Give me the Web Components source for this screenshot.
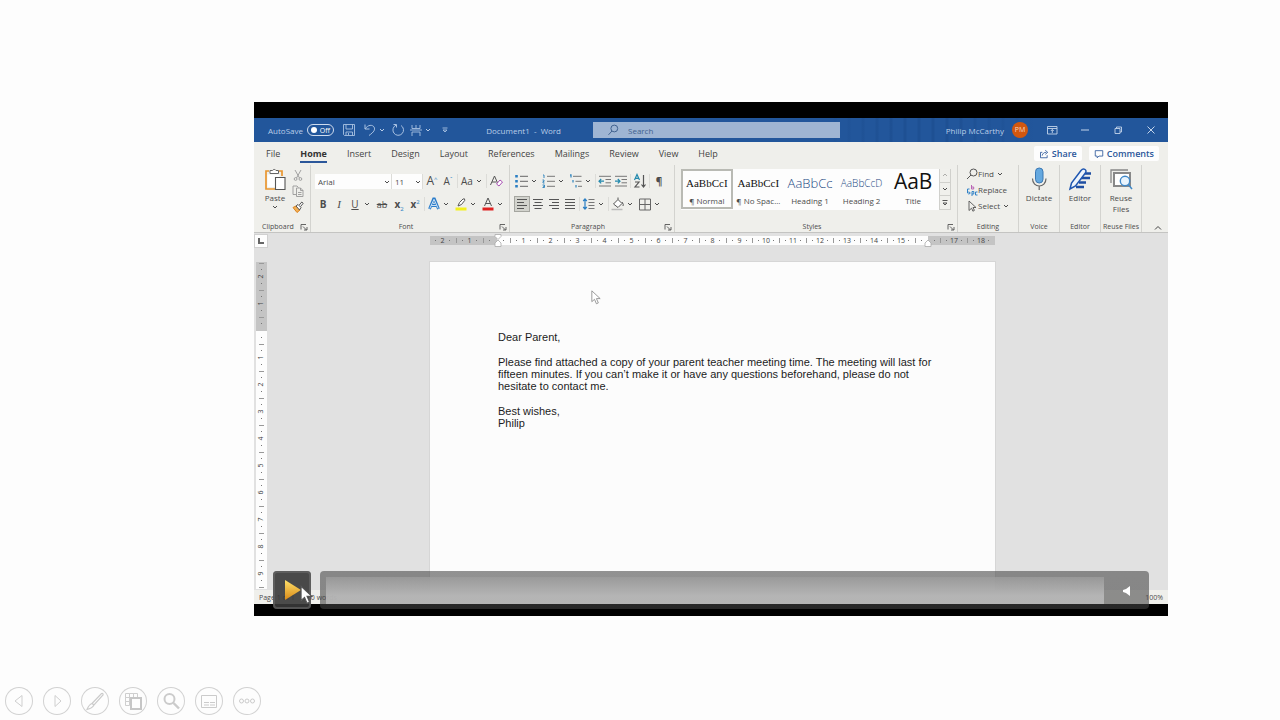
<!DOCTYPE html>
<html lang="en">
<head>
<meta charset="utf-8">
<title>Slide show</title>
<style>
html,body{margin:0;height:100%;background:#fdfdfd}
body{font-family:"Open Sans","Noto Sans",sans-serif;font-size:8px;color:#4c4c4c}
</style>
</head>
<body>
<slide-show></slide-show>
<script>
const ICONS = {
  chevron:['0 0 8 8','<path d="M2 3l2 2 2-2" fill="none" stroke="currentColor"/>'],
  more2:['0 0 8 8','<path d="M1.500 1.500h5M2 4l2 2 2-2z" fill="none" stroke="#555"/>'],
  launch:['0 0 8 8','<path d="M1 6.500V1.500h5M3 3.500l3.500 3.500M7 4v3H4" fill="none" stroke="#555" stroke-width=".9"/>'],
  save:['0 0 16 16','<path d="M2.500 2.500h11v11h-10l-1-1zM5 2.500v4.500h6.500V2.500M5 13.500V10h6.500v3.500M7.500 11v2" fill="none" stroke="#a9c2e2" stroke-width=".9"/>'],
  undo:['0 0 16 16','<path d="M3 2.500v4.500h4.500M3 7c3-4.500 7.500-4.500 9-2s0 5-5 8.500" fill="none" stroke="#a9c2e2"/>'],
  redo:['0 0 16 16','<path d="M3.500 2.500h3v3M6 3.200a5.300 5.300 0 1 0 5 .3" fill="none" stroke="#a9c2e2"/>'],
  spacing:['0 0 16 16','<path d="M2 8h12M4 3v3.500M12 3v3.500M4 6.500h8M4 14V10h8v4M8 3v3" fill="none" stroke="#a9c2e2" stroke-width=".9"/>'],
  qat:['0 0 8 8','<path d="M1.500 2h5M2 4l2 2 2-2z" fill="none" stroke="#a9c2e2" stroke-width=".9"/>'],
  search:['0 0 12 12','<circle cx="7.300" cy="4.500" r="3.400" fill="none" stroke="currentColor"/><path d="M5 7L1.500 10.800" stroke="currentColor"/>'],
  ribbonopts:['0 0 12 12','<path d="M1.500 2.500h9.500v7.500H1.500zM1.500 4.500h9.500M6.300 9V5.500M4.800 7l1.500-1.500L7.800 7" fill="none" stroke="#c3d4ea" stroke-width=".9"/>'],
  minimize:['0 0 12 12','<path d="M2 6h8" stroke="#c3d4ea"/>'],
  restore:['0 0 12 12','<path d="M3 4.500h5v5H3zM4.500 4.500V3H9.500v5H8" fill="none" stroke="#c3d4ea" stroke-width=".9"/>'],
  close:['0 0 12 12','<path d="M2.500 2.500l7 7M9.500 2.500l-7 7" stroke="#c3d4ea"/>'],
  share:['0 0 12 12','<path d="M4 4H1.800v6.500h8V7.500M3.800 8c.5-3 2.500-4 5-4M7.500 1.500L10.500 4 7.500 6.500" fill="none" stroke="#2b579a"/>'],
  comment:['0 0 12 12','<path d="M1.500 2h9v6.500H6L3.800 10.500V8.500H1.500z" fill="none" stroke="#2b579a"/>'],
  paste:['0 0 24 24','<path d="M6 4H3v18h9" fill="none" stroke="#e9962f" stroke-width="1.700"/><path d="M16 4h3v5" fill="none" stroke="#e9962f" stroke-width="1.700"/><path d="M7 6.500V3.500h2.500a2 2 0 0 1 3.500 0H15.500v3z" fill="#fff" stroke="#666"/><path d="M4.500 7.500h12V10H12v10H4.500z" fill="#fff"/><path d="M12.500 10.500h9.500v12h-9.500z" fill="#fff" stroke="#555" stroke-width="1.100"/>'],
  cut:['0 0 12 12','<path d="M3 1l4.500 8M9 1L4.500 9" fill="none" stroke="#999" stroke-width=".9"/><circle cx="3.600" cy="10" r="1.400" fill="none" stroke="#999" stroke-width=".9"/><circle cx="8.400" cy="10" r="1.400" fill="none" stroke="#999" stroke-width=".9"/>'],
  copy:['0 0 12 12','<path d="M4 9.500H1V1h4l1.500 1.500M4.500 3h4l2.500 2.500v6H4.500zM8.500 3v2.500H11M6 7.500h3.500M6 9.500h3.500" fill="none" stroke="#999" stroke-width=".9"/>'],
  brush:['0 0 12 12','<path d="M1 6.500l3-1.500 4 4-3 2.500z" fill="#f3b056" stroke="#d98320"/><path d="M4 5l2-1.500L9 6.500 7.500 9zM7.300 4L9.800 1l1.400 1.300L8.600 5.500" fill="#fff" stroke="#444" stroke-width=".9"/>'],
  clear:['0 0 16 16','<path d="M2.500 12L6.500 3l4 9M4 9h4.500" fill="none" stroke="#555"/><path d="M8.500 11l3.500-4 2.500 2-3.500 4z" fill="#fff" stroke="#a94fb4"/>'],
  effects:['0 0 16 16','<path d="M3.500 13L7.600 3h.8l4.100 10M5 9.500h6" fill="none" stroke="#2b7cc9" stroke-width="2.800"/><path d="M3.800 12.500L8 3.300l4.200 9.200M5.300 9.500h5.400" fill="none" stroke="#dbebf9" stroke-width=".9"/>'],
  pen:['0 0 16 16','<path d="M2.500 11.500h11v3h-11z" fill="#f3f01d"/><path d="M5 10l1.500-3.500L10 3q2-1 1.800 1.300L8.500 8.500 5 10z" fill="#fff" stroke="#555"/>'],
  color:['0 0 16 16','<path d="M2.500 11.500h11v3h-11z" fill="#df2222"/><path d="M4.500 10L8 2l3.500 8M5.700 7.500h4.600" fill="none" stroke="#555"/>'],
  bullets:['0 0 16 16','<path d="M2.500 2v2.500M2.500 7v2.500M2.500 12v2.500" stroke="#2b7fc4" stroke-width="2.600"/><path d="M6 3.300h8M6 8.300h8M6 13.300h8" stroke="#666"/>'],
  numbers:['0 0 16 16','<path d="M2 2h1v3M1.500 7h1.500v1.500H2V10h1.500M1.500 12h2v2.500h-2M2 13.300h1.500" fill="none" stroke="#3a8ac0"/><path d="M6 3.300h8M6 8.300h8M6 13.300h8" stroke="#777"/>'],
  multi:['0 0 16 16','<path d="M2 2h1v2.500M5 7v2.500M8 12v2.500" fill="none" stroke="#3a8ac0" stroke-width="1.300"/><path d="M5 3.300h8.500M7.500 8.300h6M10 13.300h4" stroke="#777"/>'],
  outdent:['0 0 16 16','<path d="M2 3.300h12M8.500 6.500h5.500M8.500 9.800h5.500M2 13h12" stroke="#777"/><path d="M2 8.200h5M4.200 6L2 8.200l2.200 2.200" fill="none" stroke="#2389ad" stroke-width="1.200"/>'],
  indent:['0 0 16 16','<path d="M2 3.300h12M8.500 6.500h5.500M8.500 9.800h5.500M2 13h12" stroke="#777"/><path d="M2 8.200h5M4.800 6L7 8.200l-2.200 2.200" fill="none" stroke="#2389ad" stroke-width="1.200"/>'],
  sort:['0 0 16 16','<path d="M2.500 7L5 1.500 7.500 7M3.500 5.300h3" fill="none" stroke="#2389ad" stroke-width="1.200"/><path d="M3 9h4l-4 5h4.500M11.500 2v12M9.500 11.500l2 2.500 2-2.500" fill="none" stroke="#555" stroke-width="1.200"/>'],
  left:['0 0 16 16','<path d="M3 3.500h10M3 6.500h7M3 9.500h10M3 12.500h7" stroke="#555"/>'],
  center:['0 0 16 16','<path d="M3 3.500h10M4.500 6.500h7M3 9.500h10M4.500 12.500h7" stroke="#555"/>'],
  right:['0 0 16 16','<path d="M3 3.500h10M6 6.500h7M3 9.500h10M6 12.500h7" stroke="#555"/>'],
  justify:['0 0 16 16','<path d="M3 3.500h10M3 6.500h10M3 9.500h10M3 12.500h10" stroke="#555"/>'],
  linesp:['0 0 16 16','<path d="M7.500 3.500h6M7.500 6.500h6M7.500 9.500h6M7.500 12.500h6" stroke="#777"/><path d="M4 3v10M2.200 5L4 3l1.800 2M2.200 11L4 13l1.800-2" fill="none" stroke="#2b7fc4" stroke-width="1.200"/>'],
  bucket:['0 0 16 16','<path d="M3.500 8L8 3.500 12 7.500 8 11.500zM8 3.500V1.500M12 6q2 2.500 1 4" fill="#fff" stroke="#555"/><path d="M1.500 13.500h11" stroke="#bbb" stroke-width="1.500"/>'],
  borders:['0 0 16 16','<path d="M2.500 3h11v11h-11zM8 3v11M2.500 8.500h11" fill="none" stroke="#666"/>'],
  find:['0 0 12 12','<circle cx="7.500" cy="4.500" r="3.500" fill="none" stroke="#555"/><path d="M5 7L1 11" stroke="#555"/>'],
  replace:['0 0 12 12','<path d="M5.500 1v4h2.200V3H5.500" fill="none" stroke="#b965b5"/><path d="M3.500 5H1.500v4H4M2.800 7.500L4.300 9 2.800 10.500" fill="none" stroke="#3283c7"/><path d="M6 12V7.500h1.800V10H6M11.500 8H9.500v3h2" fill="none" stroke="#3283c7"/>'],
  select:['0 0 12 12','<path d="M3 1v9.500l2.600-2.300 1.300 3 1.500-.8L7 7.500h3z" fill="none" stroke="#555" stroke-width=".9"/>'],
  mic:['0 0 24 24','<rect x="8.500" y="1" width="7.500" height="15" rx="3.700" fill="#64a8df" stroke="#3a78b4"/><path d="M5.500 11.500c0 10 13.500 10 13.500 0M12.200 19v4" fill="none" stroke="#666" stroke-width="1.200"/>'],
  editor:['0 0 24 24','<path d="M13 6.500h10M12 11h10M11 15.500h7M8 20h8" stroke="#1f4fa3" stroke-width="2.600"/><path d="M2 22l1.500-6L13 3.500q2-2.500 4-1t0 4L7.500 19z" fill="#eef5fc" stroke="#1f56b0" stroke-width="1.500"/>'],
  reuse:['0 0 24 24','<path d="M2 16V3h17" fill="none" stroke="#888" stroke-width="1.300"/><path d="M5 6h16v13H5z" fill="#fff" stroke="#888" stroke-width="2"/><circle cx="16" cy="14" r="4.700" fill="#e9f4fd" stroke="#3f88c8" stroke-width="1.400"/><path d="M19.300 17.500L23 22" stroke="#3f88c8" stroke-width="1.500"/>'],
  collapse:['0 0 8 8','<path d="M1 5.500l3-3 3 3" fill="none" stroke="#444"/>'],
  cursor:['0 0 12 18','<path d="M1 1v13l3.200-2.800 2.300 5.300 2.300-1-2.300-5.200H11z" fill="var(--fill,#fff)" stroke="var(--line,#777)" stroke-width="var(--sw,1)"/>'],
  prev:['0 0 28 28','<path d="M17 8.500v11L10 14z" fill="none" stroke="#cfcfcf"/>'],
  next:['0 0 28 28','<path d="M12 8.500v11L18 14z" fill="none" stroke="#cfcfcf"/>'],
  ink:['0 0 28 28','<path d="M11 16.500L20.500 6.500q2-.5 1.500 1.500L13 18zM11 16.500q-3 1-5 6 5-1 7-4.500z" fill="none" stroke="#cbcbcb" stroke-width="1.200"/>'],
  grid:['0 0 28 28','<path d="M6.500 6.500h4v4h-4zM10.500 6.500h4v4h-4zM14.500 6.500h4v4h-4zM6.500 10.500h4v4h-4zM6.500 14.500h4v4h-4z" fill="none" stroke="#cfcfcf"/><path d="M12 11h10v11H12z" fill="#fdfdfd" stroke="#c6c6c6" stroke-width="2"/>'],
  zoom:['0 0 28 28','<circle cx="12.500" cy="12" r="5" fill="none" stroke="#cbcbcb" stroke-width="2"/><path d="M16.500 16l5.500 5.500" stroke="#cbcbcb" stroke-width="2.400"/>'],
  captions:['0 0 28 28','<path d="M6.500 8.500h15v12h-15z" fill="none" stroke="#cbcbcb"/><path d="M9 15.500h11M9 18h11" stroke="#cbcbcb" stroke-dasharray="5 1"/>'],
  more:['0 0 28 28','<g fill="none" stroke="#cbcbcb"><circle cx="8.500" cy="14" r="2"/><circle cx="14" cy="14" r="2"/><circle cx="19.500" cy="14" r="2"/></g>'],
  play:['0 0 38 38','<defs><linearGradient id="g" x2="0" y2="1"><stop stop-color="#ffe06a"/><stop offset="1" stop-color="#d98a17"/></linearGradient></defs><path d="M12 9l16 10-16 10z" fill="url(#g)"/>'],
  mute:['0 0 12 12','<path d="M9 1v10L5 8 2 7V5l3-1z" fill="#fff"/>']
};

const define = (tag, css, html) => customElements.define(tag, class extends HTMLElement {
  constructor(){ super(); this.attachShadow({mode:'open'}); }
  connectedCallback(){
    this.shadowRoot.innerHTML = `<style>*{box-sizing:border-box}button,select,input{font:inherit;color:inherit;background:none;border:0;padding:0;margin:0;appearance:none}${css}</style>` +
      (typeof html === 'function' ? html(this) : html);
  }
});

define('ui-icon', ':host{display:block;width:var(--size,16px);height:var(--h,var(--size,16px));flex:none}svg{display:block;width:100%;height:100%}',
  el => { const [box, body] = ICONS[el.getAttribute('name')]; return `<svg viewBox="${box}" aria-hidden="true">${body}</svg>`; });

define('tool-button', `
  :host{display:flex;flex:none}
  button{display:flex;align-items:center;height:16px}
  span{display:block;min-width:16px;height:16px;font-size:10px;line-height:16px;text-align:center;white-space:nowrap}
  :host([on]) span{background:#d2d3cd;box-shadow:inset 0 0 0 1px #a5a6a0}
  .m{--size:8px;margin-right:2px}`,
  el => `<button type="button" aria-label="${el.getAttribute('label')}"><span>${el.hasAttribute('icon') ? `<ui-icon name="${el.getAttribute('icon')}"></ui-icon>` : '<slot></slot>'}</span>${el.hasAttribute('menu') ? '<ui-icon class="m" name="chevron"></ui-icon>' : ''}</button>`);

define('tool-row', `:host{display:flex;align-items:center;gap:1px;height:16px}::slotted(i){width:1px;height:14px;background:#dcdcd8}::slotted(div){display:flex}`, '<slot></slot>');

define('big-button', `
  :host{display:block}
  button{display:flex;flex-direction:column;align-items:center;width:100%;line-height:11px;text-align:center}
  ui-icon{--size:24px;margin-bottom:1px}.m{--size:8px;margin:0}`,
  el => `<button type="button"><ui-icon name="${el.getAttribute('icon')}"></ui-icon><slot></slot>${el.hasAttribute('menu') ? '<ui-icon class="m" name="chevron"></ui-icon>' : ''}</button>`);

define('text-tool', `:host{display:block}button{display:flex;align-items:center;height:16px;line-height:16px}ui-icon{--size:12px}.m{--size:8px;margin:0 0 0 2px}`,
  el => `<button type="button"><ui-icon name="${el.getAttribute('icon')}"></ui-icon><slot></slot>${el.hasAttribute('menu') ? '<ui-icon class="m" name="chevron"></ui-icon>' : ''}</button>`);

define('ribbon-group', `
  :host{display:flex;flex-direction:column;border-right:1px solid #d3d3cf;height:67px}
  .body{flex:1;min-height:0}
  footer{display:flex;align-items:center;height:10px;font-size:7px;line-height:10px;padding:0 2px;white-space:nowrap}
  footer span{flex:1;display:flex;justify-content:center}
  ui-icon{--size:8px}`,
  el => `<div class="body"><slot></slot></div><footer><span>${el.getAttribute('label')}</span>${el.hasAttribute('launch') ? '<button type="button" aria-label="Settings"><ui-icon name="launch"></ui-icon></button>' : ''}</footer>`);

define('style-card', `
  :host{display:block;min-width:0;height:40px}
  button{display:block;width:100%;height:40px;padding:0 1px;text-align:center;white-space:nowrap;border:2px solid transparent}
  :host([on]) button{border-color:#b9bab4}
  .s{display:flex;align-items:center;justify-content:center;height:24px;color:#111;font-family:var(--face,"Liberation Serif",serif);font-size:var(--fs,11px);font-weight:var(--fw,400)}
  .n{display:block;line-height:12px}
  :host(.h1){--face:"Open Sans",sans-serif;--fs:13px;--fw:300}
  :host(.h2){--face:"Open Sans",sans-serif;--fs:10px;--fw:300}
  :host(.t){--face:"Open Sans",sans-serif;--fs:21px}
  :host(.h1) .s,:host(.h2) .s{color:#1d4a84}
  :host(.t) .s{height:20px;margin-bottom:4px}`,
  el => `<button type="button"><span class="s">${el.getAttribute('sample')}</span><span class="n"><slot></slot></span></button>`);

define('title-bar', `
  :host{display:grid;grid-template-columns:339fr 247fr 328fr;align-items:center;height:24px;color:#b9cde8;white-space:nowrap;
    background:linear-gradient(90deg,#22569b 62%,transparent 70%,transparent 76%,#22569b 86%),repeating-linear-gradient(90deg,#22569b 0 5px,#1e5093 6px 8px,#22569b 9px 14px)}
  .l,.r,.q{display:flex;align-items:center}
  .l{padding-left:14px}
  label{display:flex;align-items:center;gap:4px}
  .sw{display:flex;align-items:center;justify-content:space-between;width:27px;height:12px;padding:0 3px;border:1px solid #cfdcee;border-radius:6px;color:#fff;font-size:7px}
  .sw::before{content:"";flex:none;width:6px;height:6px;border-radius:50%;background:#fff}
  input[type=checkbox]{position:absolute;opacity:0;width:1px;height:1px}
  .q{margin-left:7px}.q ui-icon{--size:16px}.q .s{--size:8px;margin-right:4px}.q .b{margin-right:5px}.q .c{margin-right:2px}.q .e{--size:8px;margin-left:5px}
  .doc{margin-left:auto;margin-right:32px}
  .find{display:flex;align-items:center;gap:9px;height:16px;padding-left:14px;background:#9fb5d3;color:#41628f}
  .find ui-icon{--size:12px}
  .find input{flex:1;min-width:0;height:16px}
  .find input::placeholder{color:#41628f;opacity:1}
  .r{justify-content:flex-end;gap:21px;padding-right:11px}
  .r ui-icon{--size:12px}
  .who{display:flex;align-items:center;gap:8px;margin-right:-3px}
  .who b{width:16px;height:16px;border-radius:50%;background:#d2570f;color:#f7d9c4;font-size:7px;line-height:16px;font-weight:400;text-align:center}`,
  `<div class="l"><label>AutoSave<input type="checkbox"><span class="sw">Off</span></label>
    <div class="q"><button aria-label="Save" class="b"><ui-icon name="save"></ui-icon></button><button aria-label="Undo"><ui-icon name="undo"></ui-icon></button><ui-icon class="s" name="chevron"></ui-icon><button aria-label="Redo" class="c"><ui-icon name="redo"></ui-icon></button><button aria-label="Spacing"><ui-icon name="spacing"></ui-icon></button><ui-icon class="s" name="chevron"></ui-icon><button aria-label="Customize toolbar"><ui-icon class="e" name="qat"></ui-icon></button></div>
    <span class="doc">Document1 &nbsp;- &nbsp;Word</span></div>
   <label class="find"><ui-icon name="search"></ui-icon><input type="search" placeholder="Search" aria-label="Search"></label>
   <div class="r"><span class="who">Philip McCarthy <b>PM</b></span>
    <button aria-label="Ribbon display options"><ui-icon name="ribbonopts"></ui-icon></button><button aria-label="Minimize"><ui-icon name="minimize"></ui-icon></button><button aria-label="Restore"><ui-icon name="restore"></ui-icon></button><button aria-label="Close"><ui-icon name="close"></ui-icon></button></div>`);

define('ribbon-tabs', `
  :host{display:flex;align-items:center;justify-content:space-between;height:23px;padding:0 9px 0 12px;font-size:9px;color:#444}
  nav{display:flex;gap:20px}
  nav button{height:19px;line-height:15px;border-bottom:2px solid transparent;padding-top:2px}
  nav .on{font-weight:700;border-color:#2b579a;color:#333}
  div{display:flex;gap:7px}
  div button{display:flex;align-items:center;gap:3px;height:15px;padding:0 5px;background:#fdfdfd;color:#2b579a;font-weight:600;border-radius:2px}
  ui-icon{--size:10px}`,
  `<nav>${['File','Home','Insert','Design','Layout','References','Mailings','Review','View','Help'].map(t => `<button type="button"${t==='Home'?' class="on"':''}>${t}</button>`).join('')}</nav>
   <div><button type="button"><ui-icon name="share"></ui-icon>Share</button><button type="button"><ui-icon name="comment"></ui-icon>Comments</button></div>`);

define('ribbon-body', `
  :host{display:flex;align-items:flex-start;height:68px;border-bottom:1px solid #c4c4c2}
  .clip{display:grid;grid-template-columns:30px 16px;gap:2px;padding:0 0 0 6px}
  .small{display:grid;gap:4px;padding-top:4px;align-content:start}
  .small ui-icon{--size:12px}
  .rows{display:grid;gap:7px;padding:8px 0 0 4px}
  .edit{padding:1px 0 0 8px}
  .sel{position:relative;display:flex}
  select{height:15px;background:#fdfdfd;padding-left:3px;border-right:1px solid #dcdcd8}
  .sel ui-icon{--size:8px;position:absolute;right:1px;top:4px;pointer-events:none}
  .f{width:77px}.z{width:31px}
  .gal{display:flex;height:41px;margin:4px 6px 0 6px;background:#fdfdfd}
  .cards{flex:1;min-width:0;display:grid;grid-template-columns:repeat(5,minmax(0,1fr))}
  .scroll{display:grid;grid-template-rows:1fr 1fr 1fr;width:12px;background:#f0f0ec}
  .scroll button{display:grid;place-items:center;border:1px solid #d0d0cc;border-top-width:0}
  .scroll ui-icon{--size:8px}
  .up{transform:rotate(180deg);opacity:.4}
  .end{flex:none;width:26px;align-self:flex-end;display:grid;place-items:center;padding-left:6px}
  .end ui-icon{--size:8px}
  big-button{padding-top:2px}
  sub,sup{font-size:6px;color:#2b7fc4;line-height:0}
  .big{font-size:12px}.serif{font-family:"Liberation Serif",serif;font-size:11px}.sm{font-size:9px}
  ribbon-group{flex:none}
  ribbon-group.styles{flex:1;min-width:0}`,
  `<ribbon-group label="Clipboard" launch style="width:57px"><div class="clip"><big-button icon="paste" menu>Paste</big-button><div class="small"><button aria-label="Cut"><ui-icon name="cut"></ui-icon></button><button aria-label="Copy"><ui-icon name="copy"></ui-icon></button><button aria-label="Format painter"><ui-icon name="brush"></ui-icon></button></div></div></ribbon-group>
  <ribbon-group label="Font" launch style="width:199px"><div class="rows">
    <tool-row><div><span class="sel"><select class="f" aria-label="Font"><option>Arial</option></select><ui-icon name="chevron"></ui-icon></span><span class="sel"><select class="z" aria-label="Font size"><option>11</option></select><ui-icon name="chevron"></ui-icon></span></div>
      <div><tool-button label="Grow font"><span class="big">A</span><sup>^</sup></tool-button><tool-button label="Shrink font">A<sup>ˇ</sup></tool-button></div><i></i><tool-button label="Change case" menu>Aa</tool-button><i></i><tool-button label="Clear formatting" icon="clear"></tool-button></tool-row>
    <tool-row><div><tool-button label="Bold"><b>B</b></tool-button><tool-button label="Italic"><em class="serif">I</em></tool-button><tool-button label="Underline" menu><u>U</u></tool-button></div><tool-button label="Strikethrough"><s class="sm">ab</s></tool-button><div><tool-button label="Subscript"><b>x</b><sub>2</sub></tool-button><tool-button label="Superscript"><b>x</b><sup>2</sup></tool-button></div><i></i><tool-button label="Text effects" icon="effects" menu></tool-button><tool-button label="Highlight" icon="pen" menu></tool-button><tool-button label="Font color" icon="color" menu></tool-button></tool-row></div></ribbon-group>
  <ribbon-group label="Paragraph" launch style="width:165px"><div class="rows">
    <tool-row><tool-button label="Bullets" icon="bullets" menu></tool-button><tool-button label="Numbering" icon="numbers" menu></tool-button><tool-button label="Multilevel list" icon="multi" menu></tool-button><i></i><div><tool-button label="Decrease indent" icon="outdent"></tool-button><tool-button label="Increase indent" icon="indent"></tool-button></div><i></i><tool-button label="Sort" icon="sort"></tool-button><i></i><tool-button label="Show marks"><b>¶</b></tool-button></tool-row>
    <tool-row><div><tool-button on label="Align left" icon="left"></tool-button><tool-button label="Center" icon="center"></tool-button><tool-button label="Align right" icon="right"></tool-button><tool-button label="Justify" icon="justify"></tool-button></div><i></i><tool-button label="Line spacing" icon="linesp" menu></tool-button><i></i><tool-button label="Shading" icon="bucket" menu></tool-button><tool-button label="Borders" icon="borders" menu></tool-button></tool-row></div></ribbon-group>
  <ribbon-group class="styles" label="Styles" launch><div class="gal"><div class="cards"><style-card on sample="AaBbCcI">¶ Normal</style-card><style-card sample="AaBbCcI">¶ No Spac...</style-card><style-card class="h1" sample="AaBbCc">Heading 1</style-card><style-card class="h2" sample="AaBbCcD">Heading 2</style-card><style-card class="t" sample="AaB">Title</style-card></div>
    <div class="scroll"><button aria-label="Previous styles"><ui-icon class="up" name="chevron"></ui-icon></button><button aria-label="Next styles"><ui-icon name="chevron"></ui-icon></button><button aria-label="More styles"><ui-icon name="more2"></ui-icon></button></div></div></ribbon-group>
  <ribbon-group label="Editing" style="width:61px"><div class="edit"><text-tool icon="find" menu>Find</text-tool><text-tool icon="replace">Replace</text-tool><text-tool icon="select" menu>Select</text-tool></div></ribbon-group>
  <ribbon-group label="Voice" style="width:41px"><big-button icon="mic">Dictate</big-button></ribbon-group>
  <ribbon-group label="Editor" style="width:41px"><big-button icon="editor">Editor</big-button></ribbon-group>
  <ribbon-group label="Reuse Files" style="width:41px"><big-button icon="reuse">Reuse<br>Files</big-button></ribbon-group>
  <button class="end" aria-label="Collapse ribbon"><ui-icon name="collapse"></ui-icon></button>`);

const unit = n => `<span class="u"><i class="d"></i><i class="t"></i><i class="d"></i><b>${n}</b></span>`;
const units = (a, b) => Array.from({length: b - a + 1}, (_, k) => unit(a + k)).join('');

define('ruler-strip', `
  :host{display:flex;font-size:7px;color:#444;line-height:9px}
  .m,.w{display:flex;overflow:hidden}
  .m{background:#c4c4c4}.w{background:#fdfdfd}
  .u{position:relative;left:3px;display:grid;grid-template-columns:repeat(4,1fr);width:27px;flex:none}
  .u>*{display:flex;align-items:center;justify-content:center;font-weight:400;font-style:normal}
  .d::before{content:"";width:1px;height:1px;background:#777}
  .t::before{content:"";width:1px;height:5px;background:#999}
  :host([vertical]){flex-direction:column;align-items:center;width:11px}
  :host([vertical]) .m,:host([vertical]) .w{flex-direction:column;width:11px;flex:none}
  :host([vertical]) .u{grid-template-columns:1fr;grid-template-rows:repeat(4,1fr);width:11px;height:27px;left:0;top:3px}
  :host([vertical]) .u b{transform:rotate(-90deg);line-height:6px}
  :host([vertical]) .t::before{width:5px;height:1px}
  .lead{width:67px;justify-content:flex-end}.body{width:431px}.tail{width:67px}
  :host([vertical]) .lead{height:69px}
  :host([vertical]) .body{height:258px}`,
  el => `<div class="m lead">${unit(2)}${unit(1)}${unit('')}</div><div class="w body">${el.hasAttribute('vertical') ? units(1,9) + unit('') : units(1,15) + unit('')}</div>${el.hasAttribute('vertical') ? '' : `<div class="m tail">${unit(17)}${unit(18)}${unit('')}</div>`}`);

define('indent-marks', `
  :host{position:absolute;width:8px;height:13px}svg{display:block;width:8px;height:13px}`,
  el => `<svg viewBox="0 0 8 13" aria-hidden="true">${el.hasAttribute('right') ? '' : '<path d="M1 .5h6v2L4 5.500 1 2.500z" fill="#fff" stroke="#aaa" stroke-width=".8"/>'}<path d="M4 6l3 3v3.500H1V9z" fill="#fff" stroke="#aaa" stroke-width=".8"/></svg>`);

define('doc-workspace', `
  :host{display:grid;grid-template-columns:14px minmax(0,1fr);grid-template-rows:15px minmax(0,1fr);min-height:0;background:#e1e1e1;padding:0 11px 0 0}
  .tab{display:grid;place-items:center;width:12px;height:12px;margin:2px 0 0 1px;background:#fdfdfd;box-shadow:0 0 0 1px #d0d0d0}
  .tab::before{content:"";width:4px;height:4px;border:solid #666;border-width:0 0 2px 2px}
  .h{display:flex;justify-content:center;align-items:center}
  .wrap{position:relative}
  .wrap ruler-strip{height:9px}
  indent-marks{left:64px;top:-2px}indent-marks[right]{left:494px}
  .side{overflow:hidden;padding:14px 0 0 2px}
  .canvas{display:flex;justify-content:center;padding-top:14px;overflow:hidden}
  article{position:relative;width:565px;flex:none;background:#fcfcfc;box-shadow:0 0 0 1px #d6d6d6;padding:69px 0 0 68px;color:#1c1c1c;font-family:"Liberation Sans",Arial,sans-serif;font-size:11px;line-height:12px;white-space:nowrap}
  p{margin:0 0 13px}
  .cur{position:absolute;left:161px;top:28px;--size:10px;--h:15px;--line:#888}`,
  `<button class="tab" aria-label="Tab selector"></button><div class="h"><div class="wrap"><ruler-strip></ruler-strip><indent-marks></indent-marks><indent-marks right></indent-marks></div></div>
   <div class="side"><ruler-strip vertical></ruler-strip></div>
   <div class="canvas"><article><p>Dear Parent,</p><p>Please find attached a copy of your parent teacher meeting time. The meeting will last for<br>fifteen minutes. If you can’t make it or have any questions beforehand, please do not<br>hesitate to contact me.</p><p>Best wishes,<br>Philip</p><ui-icon class="cur" name="cursor"></ui-icon></article></div>`);

define('status-bar', `:host{display:flex;justify-content:space-between;align-items:center;height:14px;padding:0 5px;background:#efefeb;font-size:7px}div{display:flex;gap:12px}`,
  '<div><span>Page 1 of 1</span><span>60 words</span></div><span>100%</span>');

define('player-controls', `
  :host{position:absolute;left:19px;right:19px;bottom:7px;display:flex;gap:9px;height:38px}
  .play{position:relative;width:38px;height:38px;border-radius:4px;background:rgba(56,56,56,.9);box-shadow:inset 0 0 0 2px rgba(110,110,110,.55)}
  .play ui-icon{--size:38px}
  .play .cur{position:absolute;left:27px;top:14px;--size:13px;--h:20px;--line:#555}
  .bar{flex:1;display:flex;border-radius:4px;background:linear-gradient(rgba(80,80,80,.62),rgba(68,68,68,.58));padding:6px 0 5px 6px}
  .track{flex:1;background:linear-gradient(rgba(156,156,156,.8),rgba(184,184,184,.92) 70%)}
  input{display:block;width:100%;height:100%;opacity:0}
  .vol{display:grid;place-items:center;width:45px}
  .vol ui-icon{--size:12px}`,
  `<button class="play" aria-label="Play"><ui-icon name="play"></ui-icon><ui-icon class="cur" name="cursor"></ui-icon></button>
   <div class="bar"><div class="track"><input type="range" aria-label="Seek" value="0"></div><button class="vol" aria-label="Volume"><ui-icon name="mute"></ui-icon></button></div>`);

define('video-frame', `
  :host{position:relative;display:flex;flex-direction:column;background:#000;padding:16px 0 12px;overflow:hidden;min-height:0}
  .ribbon{background:#efefeb;flex:none}
  title-bar,status-bar{flex:none}
  doc-workspace{flex:1}`,
  '<title-bar></title-bar><div class="ribbon"><ribbon-tabs></ribbon-tabs><ribbon-body></ribbon-body></div><doc-workspace></doc-workspace><status-bar></status-bar><player-controls></player-controls>');

define('slide-nav', `
  :host{display:flex;gap:10px;padding:0 5px 5px}
  button{width:28px;height:28px;border-radius:50%;box-shadow:inset 0 0 0 1px #d2d2d2}
  ui-icon{--size:28px}`,
  [['prev','Previous'],['next','Next'],['ink','Pen'],['grid','All slides'],['zoom','Zoom'],['captions','Subtitles'],['more','More']].map(([i,l]) => `<button type="button" aria-label="${l}"><ui-icon name="${i}"></ui-icon></button>`).join(''));

define('slide-show', `
  :host{display:flex;flex-direction:column;height:100vh;min-height:480px}
  video-frame{flex:1;margin:102px 112px 71px 254px}
  slide-nav{flex:none}`,
  '<video-frame></video-frame><slide-nav></slide-nav>');
</script>
</body>
</html>
